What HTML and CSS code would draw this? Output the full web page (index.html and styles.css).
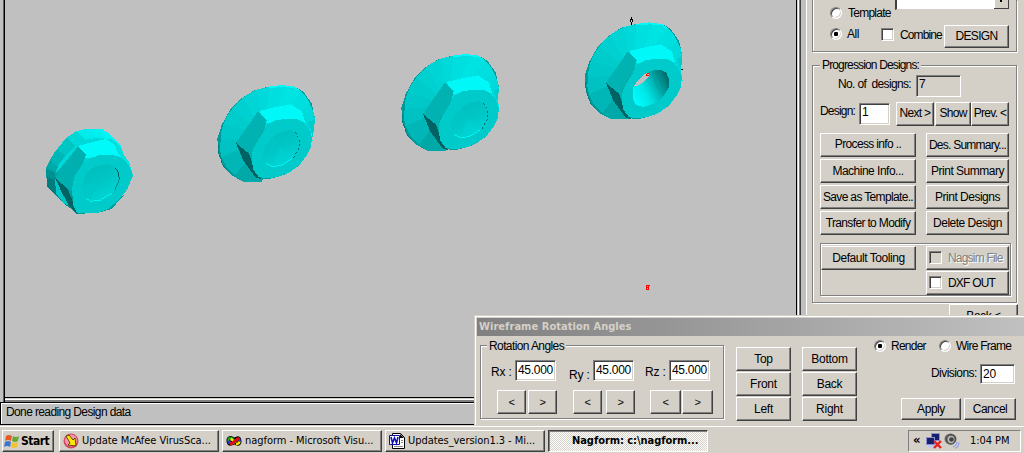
FILE: index.html
```html
<!DOCTYPE html>
<html lang="en">
<head>
<meta charset="utf-8">
<title>Nagform</title>
<link rel="stylesheet" href="styles.css">
</head>
<body>
<div class="screen">
  <main class="workspace">
    <div class="viewport">
      <svg class="scene" viewBox="5 0 791 397" width="791" height="397">
        <defs>
          <linearGradient id="body" x1="0" y1="1" x2=".7" y2="0"><stop offset="0" stop-color="#006f6f"/><stop offset=".35" stop-color="#00a5a5"/><stop offset=".65" stop-color="#00d5d5"/><stop offset="1" stop-color="#00fafa"/></linearGradient>
          <linearGradient id="dish" x1=".2" y1="0" x2=".7" y2="1"><stop offset="0" stop-color="#00bcbc"/><stop offset=".5" stop-color="#00c6c6"/><stop offset="1" stop-color="#00d8d8"/></linearGradient>
          <linearGradient id="bore" x1="0" y1=".8" x2="1" y2=".25"><stop offset="0" stop-color="#00ffff"/><stop offset=".35" stop-color="#00e6e6"/><stop offset=".65" stop-color="#00b0b0"/><stop offset="1" stop-color="#006868"/></linearGradient>
          <g id="flange">
            <path fill="#009a9a" d="M205 50L245 45 285 50 310 65 335 100 345 145 335 215 180 335 130 335 100 319 70 290 55 250 52 205 65 165 90 120 125 85 160 62z"/>
            <path fill="#00a8a8" d="M195 200L185 335 130 335 105 318z"/>
            <path fill="#00b6b6" d="M195 200L105 318 80 293 65 262z"/>
            <path fill="#00c2c2" d="M195 200L65 262 60 238 62 210z"/>
            <path fill="#00c8c8" d="M195 200L62 210 64 184 71 160z"/>
            <path fill="#00cccc" d="M195 200L71 160 82 137 97 115z"/>
            <path fill="#00d0d0" d="M195 200L97 115 112 98 129 83z"/>
            <path fill="#00d4d4" d="M195 200L129 83 149 69 169 59z"/>
            <path fill="#00d9d9" d="M195 200L169 59 190 54 207 51z"/>
            <path fill="#00dfdf" d="M195 200L207 51 232 50 258 51z"/>
            <path fill="#00e3e3" d="M195 200L258 51 285 53 302 63z"/>
            <path fill="#00dfdf" d="M195 200L302 63 319 82 330 102z"/>
            <path fill="#00dada" d="M195 200L330 102 340 124 345 148z"/>
            <path fill="#00cccc" d="M195 200L345 148 342 180 335 215z"/>
            <path fill="#00fafa" d="M207 54L205 50 245 45 285 50 302 63 282 54 250 51z"/>
            <path stroke="#007c7c" stroke-width="3" fill="none" stroke-dasharray="12 3" d="M54 225L57 252 70 289 82 300"/>
          </g>
          <g id="hex">
            <path fill="#00a0a0" d="M165 323L205 328 260 312 295 288 260 290z"/>
            <path fill="#00f8f8" d="M178 123L225 112 272 103 306 124 320 150 334 184 338 215 300 170 197 158z"/>
            <path fill="#00d8d8" d="M306 124L320 146 333 185 336 214 322 180z"/>
            <path fill="#00b2b2" d="M174 124L200 150 191 186 155 237 108 219z"/>
            <path fill="#006262" d="M108 219L148 252 158 285 183 327 167 323 130 272z"/>
            <path fill="#00b2b2" d="M108 219L155 237 157 270 148 252z"/>
            <path fill="#00caca" d="M200 164L225 151 252 147 289 147 310 156 325 175 335 200 334 228 321 256 298 285 269 307 239 319 205 325 176 321 160 299 155 270 158 242 175 210 188 190z"/>
          </g>
          <g id="recess">
            <path fill="url(#dish)" d="M221 198L245 185 270 180 286 187 298 207 297 235 279 265 250 284 219 291 198 280 187 255 195 227z"/>
            <path fill="#00c5c5" d="M238 232L187 255 195 227 221 198z"/>
            <path fill="#00d4d4" d="M238 232L279 265 250 284 219 291z" opacity=".55"/>
            <path fill="none" stroke="#00f5f5" stroke-width="3" d="M198 281L219 291 249 284 276 266"/>
            <path fill="none" stroke="#006f6f" stroke-width="3" stroke-dasharray="5 8" d="M286 187L298 207 297 234 280 265"/>
          </g>
        </defs>
        <g shape-rendering="crispEdges">
          <g transform="translate(0 100) scale(.33333)">
            <path fill="url(#body)" d="M255 87L305 87 325 98 342 114 362 135 372 165 388 188 399 226 385 260 335 325 295 338 230 342 215 328 192 311 165 285 141 258 138 205 150 180 165 155 200 112 230 93z"/>
            <path fill="#009292" d="M138 205L166 218 166 240 141 238z"/>
            <path fill="#007c7c" d="M141 232L166 240 168 288 141 258z"/>
            <path fill="#00a9a9" d="M138 205L150 180 173 200 166 218z"/>
            <path fill="#00b7b7" d="M150 180L172 148 197 168 173 200z"/>
            <path fill="#00c5c5" d="M172 148L200 112 225 138 197 168z"/>
            <path fill="#00d8d8" d="M200 112L230 93 257 119 225 138z"/>
            <path fill="#00ebeb" d="M230 93L255 87 284 114 257 119z"/>
            <path fill="#00d9d9" d="M197 168L225 138 257 119 290 114 335 117 260 135 233 139 180 205 166 218 178 190z"/>
            <path fill="#00c7c7" d="M165 234L187 280 207 317 192 311 168 280z"/>
            <path fill="#009a9a" d="M230 342L295 338 335 327 372 285 330 300z"/>
            <path fill="#00fafa" d="M235 138L286 124 318 117 343 130 365 157 374 173 335 164 258 175z"/>
            <path fill="#00dede" d="M318 117L335 118 360 138 372 165 388 188 357 164 342 133z"/>
            <path fill="#00b0b0" d="M233 139L258 163 251 185 218 241 166 234 188 199z"/>
            <path fill="#006262" d="M165 234L202 266 217 301 232 342 207 317 187 280z"/>
            <path fill="#00b0b0" d="M166 234L220 238 217 275 202 266z"/>
            <path fill="#00caca" d="M248 192L268 176 300 165 335 164 370 175 387 197 399 226 382 268 356 300 325 327 295 338 232 340 218 312 217 260 224 229z"/>
            <path fill="url(#dish)" d="M260 218L286 199 323 192 344 202 358 223 355 250 334 281 301 300 271 304 252 286 246 260z"/>
            <path fill="#00c8c8" d="M293 242L246 260 252 286 271 304z"/>
            <path fill="none" stroke="#00f5f5" stroke-width="3" d="M258 294L272 304 302 300 335 280"/>
            <path fill="none" stroke="#005f5f" stroke-width="3" d="M344 203L355 216 358 238"/>
            <path fill="none" stroke="#008c8c" stroke-width="3" d="M358 238L345 270"/>
          </g>
          <g transform="translate(200 70) scale(.33333)"><use href="#flange"/><use href="#hex"/><use href="#recess"/></g>
          <g transform="translate(384 39) scale(.33333)"><use href="#flange"/><g transform="translate(5 4)"><use href="#hex" transform="translate(4 2)"/><use href="#recess" transform="translate(8 2)"/></g></g>
          <g transform="translate(570 5) scale(.33333)">
            <path fill="#000" d="M182 36h4v24h-4zM179 42h9v9h-9zM328 192h11v3h-11z"/>
            <path fill="#e8e060" d="M183 45h3v5h-3z"/>
            <use href="#flange" transform="translate(-8 7)"/>
            <use href="#hex" transform="translate(0 15)"/>
            <path fill="url(#bore)" d="M245 197L272 194 289 203 298 225 296 248 278 277 255 295 222 306 199 300 188 282 189 247 213 216z"/>
            <path fill="#00c4c4" d="M191 243L205 220 230 202 238 204 222 218z"/>
            <path fill="#c0c0c0" d="M191 245L204 225 224 207 237 202 238 213 220 232 205 241z"/>
            <path fill="none" stroke="#f00" stroke-width="3" d="M239 203L230 206V213L236 211"/>
            <path fill="none" stroke="#008080" stroke-width="2" opacity=".45" d="M246 202L262 247 284 269M257 197L276 246 288 258M270 195L286 239"/>
          </g>
          <path fill="none" stroke="#f00" d="M645.500 285.500h4M646.500 285v4h2v-4M646 287.500h3"/>
        </g>
      </svg>
    </div>
    <aside class="side">
      <section class="group group-source">
        <div class="source-row row-template"><i class="radio"></i><span class="t tight">Template</span><div class="combo"><span class="combo-arrow"></span></div></div>
        <div class="source-row row-all"><i class="radio on"></i><span class="t">All</span><i class="check"></i><span class="t tight">Combine</span><button class="btn b-design">DESIGN</button></div>
      </section>
      <section class="group group-prog">
        <h2 class="legend">Progression Designs:</h2>
        <div class="count-row"><span class="t">No. of&nbsp; designs:</span><span class="field gray">7</span></div>
        <div class="design-row"><span class="t">Design:</span><span class="field">1</span><button class="btn b-next">Next &gt;</button><button class="btn b-show">Show</button><button class="btn b-prev">Prev. &lt;</button></div>
        <div class="actions">
          <button class="btn">Process info ..</button><button class="btn">Des. Summary...</button>
          <button class="btn">Machine Info...</button><button class="btn">Print Summary</button>
          <button class="btn">Save as Template..</button><button class="btn">Print Designs</button>
          <button class="btn">Transfer to Modify</button><button class="btn">Delete Design</button>
        </div>
        <div class="tooling">
          <button class="btn">Default Tooling</button>
          <div class="toggles"><button class="btn toggle off"><i class="check"></i><span>Nagsim File</span></button><button class="btn toggle"><i class="check"></i><span>DXF OUT</span></button></div>
        </div>
      </section>
      <button class="btn b-back">Back &lt;</button>
    </aside>
  </main>
  <div class="status"><span>Done reading Design data</span></div>
  <footer class="taskbar">
    <div class="task start"><svg width="16" height="15" viewBox="0 0 16 15"><path fill="#e65a28" d="M2 2q3-2 6 0L7 7Q4 5 1 7z"/><path fill="#69a933" d="M9 2q3 2 6 0l-1 5q-3 2-6 0z"/><path fill="#3d74d0" d="M1 8q3-2 6 0l-1 5q-3-2-6 0z"/><path fill="#f2c32e" d="M8 8q3 2 6 0l-1 5q-3 2-6 0z"/></svg><b>Start</b></div>
    <div class="task"><svg width="16" height="16" viewBox="0 0 16 16"><circle cx="8" cy="8" r="7.500" fill="#d74664"/><circle cx="8" cy="7.500" r="6" fill="#f29aa8"/><path fill="#ffe600" stroke="#3c2800" stroke-width=".8" d="M3 3l3-1 4 5 2-2 1 8-8-1 2-2z"/></svg><span>Update McAfee VirusSca...</span></div>
    <div class="task vs"><svg width="16" height="16" viewBox="0 0 16 16"><path fill="none" stroke="#000" stroke-width="4" d="M8 8C6 4 2 4 2.500 8s4 3 5.500 0 5-4 5.500 0-4 3-5.500 0z"/><path fill="none" stroke="#18a018" stroke-width="2.500" d="M8 8C6 4 2 4 2.500 8"/><path fill="none" stroke="#2040e0" stroke-width="2.500" d="M2.500 8c.5 3 3.500 3 5 1M12 5.500q2 1 1.500 3"/><path fill="none" stroke="#ffe600" stroke-width="2.500" d="M5 5.500l4 4.500M10 10.500q3 1 3.500-2"/><path fill="none" stroke="#e01010" stroke-width="3" d="M4 11c4 0 5-5 9-5.500"/></svg><span>nagform - Microsoft Visu...</span></div>
    <div class="task word"><svg width="16" height="16" viewBox="0 0 16 16"><path fill="#fff" stroke="#000" d="M3.500.5h8l4 4v11h-12z"/><path fill="#000" d="M11 1v4h4z"/><path stroke="#888" d="M12 7.500h2M12 9.500h2M5 13.500h9"/><path fill="#fff" stroke="#1010a0" d="M.5 2.500h10v9H.5z"/><path fill="none" stroke="#1010b0" stroke-width="1.600" d="M2 4l1.500 6 2-5 2 5L9 4"/></svg><span>Updates_version1.3 - Mi...</span></div>
    <div class="task active"><b>Nagform: c:\nagform...</b></div>
    <div class="tray"><span class="chev">«</span>
      <svg width="16" height="16" viewBox="0 0 16 16"><path fill="#8d92cc" d="M5 0h9v8H5z"/><path fill="#16206c" d="M6 1h7v6H6z"/><path fill="#8d92cc" d="M0 4h9v8H0z"/><path fill="#16206c" d="M1 5h7v6H1z"/><path fill="#c5c9e8" d="M2 12h6l1 3H1z"/><path stroke="#e32222" stroke-width="2.400" d="M8 8l7 7M15 8l-7 7"/></svg>
      <svg width="16" height="16" viewBox="0 0 16 16"><ellipse cx="6.500" cy="6" rx="6" ry="5.500" fill="#666"/><ellipse cx="7" cy="6.500" rx="4.200" ry="4.500" fill="#b8b8b8" stroke="#333"/><circle cx="7.500" cy="6.500" r="2.300" fill="#444"/><path fill="none" stroke="#8d94e6" d="M9 14q4-1 4-5M11 15.500q4-1 4-6"/></svg>
      <span class="clock">1:04 PM</span></div>
  </footer>

  <div class="dialog">
    <h1 class="title">Wireframe Rotation Angles</h1>
    <div class="dialog-body">
      <section class="group rotation">
        <h2 class="legend">Rotation Angles</h2>
        <div class="axis"><div class="value"><span class="t">Rx :</span><span class="field">45.000</span></div><div class="steps"><button class="btn">&lt;</button><button class="btn">&gt;</button></div></div>
        <div class="axis ry"><div class="value"><span class="t low">Ry :</span><span class="field">45.000</span></div><div class="steps"><button class="btn">&lt;</button><button class="btn">&gt;</button></div></div>
        <div class="axis rz"><div class="value"><span class="t">Rz :</span><span class="field">45.000</span></div><div class="steps"><button class="btn">&lt;</button><button class="btn">&gt;</button></div></div>
      </section>
      <div class="views"><button class="btn">Top</button><button class="btn">Bottom</button><button class="btn">Front</button><button class="btn">Back</button><button class="btn">Left</button><button class="btn">Right</button></div>
      <div class="options">
        <div class="modes"><i class="radio on"></i><span class="t">Render</span><i class="radio"></i><span class="t">Wire Frame</span></div>
        <div class="divisions"><span class="t">Divisions:</span><span class="field">20</span></div>
        <div class="confirm"><button class="btn">Apply</button><button class="btn">Cancel</button></div>
      </div>
    </div>
  </div>
</div>
</body>
</html>
```
FILE: styles.css
```css
* { box-sizing: border-box; }
body { margin: 0; background: #d4d0c8; color: #000; font: 12px/14px "Liberation Sans", Arial, sans-serif; letter-spacing: -.45px; }
h1, h2 { margin: 0; font-size: inherit; font-weight: normal; }
.screen { position: relative; width: 1024px; height: 453px; overflow: hidden; display: flex; flex-direction: column; }
.workspace { display: flex; height: 402px; flex: none; background: #c0c0c0; }
.viewport { width: 807px; height: 402px; padding-left: 5px; background: linear-gradient(90deg, #c0c0c0 3px, #606060 3px 4px, #000 4px 5px, #c0c0c0 5px 796px, #000 796px 797px, #d4d0c8 797px 798px, #fff 798px 799px, #808080 799px 800px, #404040 800px 801px, #c0c0c0 801px 806px, #fff 806px); }
.scene { display: block; width: 791px; height: 402px; background: linear-gradient(#c0c0c0 397px, #000 397px 398px, #d4d0c8 398px 399px, #fff 399px 400px, #808080 400px); padding-bottom: 5px; }
.side { width: 217px; padding: 0 7px 0 5px; background: #d4d0c8; display: flex; flex-direction: column; }
.t { white-space: pre; }
.tight { letter-spacing: -.75px; }

.group { border: 1px solid #808080; box-shadow: 1px 1px #fff, inset 1px 1px #fff; }
.group-source { height: 52px; border-top: 0; box-shadow: 1px 1px #fff, inset 1px 0 #fff; }
.source-row { display: flex; align-items: center; }
.row-template { height: 25px; padding-left: 17px; }
.row-template .t { margin-left: 6px; width: 47px; }
.combo { align-self: flex-start; height: 10px; width: 115px; background: #fff; border: 1px solid #d4d0c8; border-width: 0 1px 1px 2px; border-left-color: #404040; display: flex; justify-content: flex-end; }
.combo-arrow { width: 15px; height: 9px; background: #d4d0c8; border: solid #404040; border-width: 0 1px 1px 0; box-shadow: inset 1px 0 #fff; }
.combo-arrow::after { content: ""; display: block; margin: 0 auto; width: 4px; height: 2px; background: linear-gradient(#000, #000) center / 2px 2px no-repeat; }
.row-all { height: 22px; padding-left: 17px; }
.row-all .t { margin-left: 5px; width: 34px; margin-top: -4px; }
.row-all .radio { margin-top: -5px; }
.row-all .check { margin-top: -3px; }
.row-all .check + .t { margin: -2px 0 0 6px; width: 44px; }
.row-all .tight { letter-spacing: -.9px; }
.radio { width: 12px; height: 12px; flex: none; border-radius: 50%; background: #fff; border: 1px solid; border-color: #808080 #fff #fff #808080; box-shadow: inset 1px 1px #404040, inset -1px -1px #d4d0c8; }
.radio.on { background: radial-gradient(circle, #000 2px, #fff 2.5px); }
.check { width: 13px; height: 13px; flex: none; background: #fff; border: 1px solid; border-color: #808080 #fff #fff #808080; box-shadow: inset 1px 1px #404040, inset -1px -1px #d4d0c8; }
.btn { display: flex; align-items: center; justify-content: center; padding: 0 0 1px; margin: 0; border: 1px solid; border-color: #fff #404040 #404040 #fff; border-radius: 0; box-shadow: inset -1px -1px #808080; background: #d4d0c8; color: #000; font: inherit; letter-spacing: -.45px; white-space: nowrap; flex: none; }
.b-design { width: 65px; height: 23px; letter-spacing: -.7px; }
.legend { width: max-content; height: 14px; padding: 0 2px; background: #d4d0c8; }
.group-prog .legend { letter-spacing: -.85px; }
.rotation .legend { letter-spacing: -.6px; }
.field { display: block; height: 22px; background: #fff; border: 1px solid; border-color: #808080 #fff #fff #808080; box-shadow: inset 1px 1px #404040, inset -1px -1px #d4d0c8; padding: 2px 3px; }
.field.gray { background: #d4d0c8; box-shadow: inset 1px 1px #404040; padding: 1px 2px; }

.group-prog { margin-top: 13px; height: 238px; width: 205px; padding-left: 7px; }
.group-prog .legend { margin-top: -8px; }
.count-row { display: flex; margin-top: 3px; padding-left: 18px; height: 22px; }
.count-row .t { width: 78px; padding-top: 2px; letter-spacing: -.65px; }
.count-row .field { width: 45px; }
.design-row { display: flex; height: 24px; margin-top: 5px; }
.design-row .t { width: 39px; padding-top: 2px; letter-spacing: -.8px; }
.design-row .field { width: 31px; margin-right: 6px; margin-top: 1px; padding: 1px 2px; }
.design-row .btn { height: 24px; letter-spacing: -.7px; padding-bottom: 2px; }
.b-next { width: 38px; margin-right: 1px; }
.b-show { width: 36px; }
.b-prev { width: 38px; }
.actions { display: grid; grid-template-columns: 96px 83px; grid-auto-rows: 24px; column-gap: 10px; row-gap: 2px; margin-top: 7px; }
.actions .btn { letter-spacing: -.5px; }
.actions .btn:nth-child(2) { letter-spacing: -.75px; padding-bottom: 0; }
.actions .btn:nth-child(1) { letter-spacing: -.65px; padding-bottom: 2px; }
.actions .btn:nth-child(5), .actions .btn:nth-child(7) { letter-spacing: -.65px; }
.tooling { display: flex; justify-content: space-between; margin-top: 8px; width: 191px; height: 53px; padding: 2px 1px 0 0; border: 1px solid #808080; box-shadow: 1px 1px #fff, inset 1px 1px #fff; }
.tooling .btn { width: 95px; height: 24px; }
.toggles { display: flex; flex-direction: column; gap: 1px; }
.tooling .toggle { width: 83px; justify-content: flex-start; padding-left: 2px; }
.toggle span { margin-left: 6px; letter-spacing: -.8px; }
.toggle.off { color: #808080; text-shadow: 1px 1px #fff; }
.toggle.off .check { background: #d4d0c8; }
.b-back { width: 69px; height: 24px; align-self: flex-end; margin: 1px -1px 0 0; }

.status { height: 23px; flex: none; background: #c0c0c0; border: solid #000; border-width: 1px 0 1px 1px; box-shadow: inset 1px 1px #fff; padding: 2px 5px; letter-spacing: -.62px; }
.taskbar { height: 28px; flex: none; display: flex; align-items: flex-start; padding: 4px 3px 0 2px; border-top: 1px solid #d4d0c8; box-shadow: inset 0 1px #fff; font: 11px/14px "DejaVu Sans Condensed", Tahoma, sans-serif; letter-spacing: -.05px; }
.task { width: 160px; height: 22px; margin-right: 3px; padding-left: 3px; display: flex; align-items: center; gap: 3px; white-space: nowrap; border: 1px solid; border-color: #fff #404040 #404040 #fff; box-shadow: inset -1px -1px #808080; }
.task svg, .tray svg { flex: none; }
.start { width: 52px; margin-right: 5px; padding-left: 1px; gap: 1px; font-size: 12px; letter-spacing: -.5px; }
.active { padding-left: 23px; border-color: #404040 #fff #fff #404040; box-shadow: inset 1px 1px #808080; background: repeating-conic-gradient(#fff 0 25%, #d4d0c8 0 50%) 0 0 / 2px 2px; }
.tray { margin-left: auto; width: 113px; height: 22px; display: flex; align-items: center; padding-left: 4px; border: 1px solid; border-color: #808080 #fff #fff #808080; white-space: nowrap; }
.chev { width: 13px; font-weight: bold; font-size: 13px; margin-top: -2px; }
.tray svg + svg { margin-left: 2px; }
.clock { margin-left: 10px; }

.dialog { position: absolute; left: 474px; top: 315px; width: 550px; height: 110px; background: #d4d0c8; border: solid #d4d0c8; border-width: 1px 0 0 1px; box-shadow: inset 1px 1px #fff; padding: 2px 0 0 2px; }
.title { height: 18px; padding: 2px; background: linear-gradient(90deg, #808080, #c0c0c0); color: #d4d0c8; font: bold 11px/14px "DejaVu Sans Condensed", Tahoma, sans-serif; letter-spacing: .05px; }
.dialog-body { display: flex; padding-left: 3px; }
.rotation { width: 244px; height: 74px; margin-top: 9px; padding-left: 16px; display: grid; grid-template-columns: 76px 78px 66px; grid-template-rows: 7px 1fr; }
.rotation .legend { grid-column: 1 / -1; margin: -7px 0 0 -10px; }
.value { display: flex; height: 24px; margin: 7px 0 0 -7px; }
.value .t { width: 25px; padding: 5px 0 0 1px; letter-spacing: -.2px; }
.value .low { padding-top: 8px; }
.value .field { width: 41px; letter-spacing: -.3px; padding: 2px; height: 21px; }
.ry .value { margin-left: -5px; }
.rz .value { margin-left: -7px; }
.steps { display: flex; gap: 2px; margin-top: 6px; }
.steps .btn { width: 29px; height: 24px; font-size: 11px; }
.ry .steps { gap: 4px; }
.rz .steps { gap: 1px; margin-left: -1px; }
.rz .steps .btn { width: 31px; }
.views { display: grid; grid-template-columns: 55px 55px; grid-auto-rows: 24px; gap: 1px 11px; margin: 11px 0 0 12px; align-content: start; }
.views .btn { letter-spacing: -.25px; }
.options { margin-left: 17px; width: 143px; }
.modes { display: flex; align-items: center; height: 14px; margin-top: 3px; }
.modes .t { margin-left: 5px; width: 48px; letter-spacing: -.75px; }
.modes .t:last-child { width: auto; }
.divisions { display: flex; margin: 11px 0 0 57px; }
.divisions .t { width: 49px; padding-top: 2px; letter-spacing: -.55px; }
.divisions .field { width: 35px; height: 20px; letter-spacing: -.1px; padding-left: 2px; }
.confirm { display: flex; gap: 3px; margin: 14px 0 0 27px; }
.confirm .btn { width: 60px; height: 22px; }
.confirm .btn + .btn { width: 52px; }
```
